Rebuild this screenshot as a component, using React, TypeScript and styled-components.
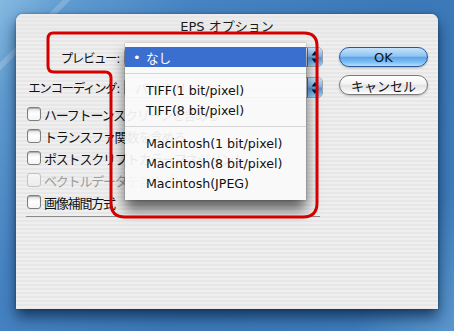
import styled, { createGlobalStyle } from 'styled-components';

const GlobalStyle = createGlobalStyle`
  html, body {
    margin: 0;
    padding: 0;
  }
  body {
    width: 454px;
    height: 331px;
    overflow: hidden;
    font-family: "DejaVu Sans", "Noto Sans CJK JP", sans-serif;
    color: #111;
  }
`;

const checks = [
  { label: 'ハーフトーンスクリーンを含める', disabled: false },
  { label: 'トランスファ関数を含める', disabled: false },
  { label: 'ポストスクリプトカラーマネジメント', disabled: false },
  { label: 'ベクトルデータを含める', disabled: true },
  { label: '画像補間方式', disabled: false },
];

type MenuEntry = { text: string; selected?: boolean } | 'sep';

const menuEntries: MenuEntry[] = [
  { text: 'なし', selected: true },
  'sep',
  { text: 'TIFF(1 bit/pixel)' },
  { text: 'TIFF(8 bit/pixel)' },
  'sep',
  { text: 'Macintosh(1 bit/pixel)' },
  { text: 'Macintosh(8 bit/pixel)' },
  { text: 'Macintosh(JPEG)' },
];

const ArrowsIcon = () => (
  <svg width="8" height="14" viewBox="0 0 8 14">
    <path d="M4 1 L7.5 5.5 L0.5 5.5 Z" fill="#111" />
    <path d="M4 13 L7.5 8.5 L0.5 8.5 Z" fill="#111" />
  </svg>
);

const App = () => {
  return (
    <Desktop>
      <GlobalStyle />
      <Window>
        <TitleBar>EPS オプション</TitleBar>
        <Body>
          <LeftPane>
            <FieldRow>
              <FieldLabel>プレビュー:</FieldLabel>
              <PopupButton>
                <PopupText>なし</PopupText>
                <PopupCap><ArrowsIcon /></PopupCap>
              </PopupButton>
            </FieldRow>
            <FieldRow>
              <FieldLabel>エンコーディング:</FieldLabel>
              <PopupButton>
                <PopupText>バイナリ</PopupText>
                <PopupCap><ArrowsIcon /></PopupCap>
              </PopupButton>
            </FieldRow>
            <CheckList>
              {checks.map((c) => (
                <CheckRow key={c.label} $disabled={c.disabled}>
                  <CheckBox $disabled={c.disabled} />
                  <span>{c.label}</span>
                </CheckRow>
              ))}
            </CheckList>
            <Divider />
          </LeftPane>
          <RightPane>
            <AquaButton $primary>OK</AquaButton>
            <AquaButton>キャンセル</AquaButton>
          </RightPane>
        </Body>

        <Menu>
          {menuEntries.map((m, i) =>
            m === 'sep' ? (
              <MenuSeparator key={i} />
            ) : (
              <MenuItem key={i} $selected={m.selected}>
                <Mark>{m.selected ? '•' : ''}</Mark>
                {m.text}
              </MenuItem>
            )
          )}
        </Menu>
      </Window>

      {/* red hand-drawn annotation over the dialog */}
      <Annotation width="454" height="331" viewBox="0 0 454 331">
        <path
          d="M53 33 L304 33 Q317 33 317 46 L317 203 Q317 217 303 217 L125 217 Q111 217 111 203 L111 78 Q111 72 105 72 L54 72 Q48 72 48 66 L48 39 Q48 33 53 33 Z"
          fill="none"
          stroke="#d40000"
          strokeWidth="3"
          strokeLinejoin="round"
        />
      </Annotation>
    </Desktop>
  );
};

export default App;

const Desktop = styled.div`
  position: relative;
  width: 454px;
  height: 331px;
  box-sizing: border-box;
  padding: 14px 0 0 16px;
  overflow: hidden;
  background:
    linear-gradient(135deg, transparent 0 8%, rgba(255, 255, 255, 0.18) 8% 9%, transparent 9%),
    linear-gradient(125deg, #86b9e0 0%, #5f9bd0 10%, #4683c2 28%, #3b78b8 60%, #3d7bb9 85%, #5a97cc 100%);
`;

const Window = styled.div`
  position: relative;
  width: 422px;
  height: 295px;
  display: flex;
  flex-direction: column;
  border-radius: 7px 7px 0 0;
  background: repeating-linear-gradient(180deg, #efefef 0 2px, #e7e7e7 2px 4px);
  box-shadow: 0 8px 14px rgba(0, 20, 50, 0.65), 0 0 3px rgba(0, 0, 0, 0.35);
`;

const TitleBar = styled.div`
  height: 22px;
  display: flex;
  align-items: center;
  justify-content: center;
  font-size: 13px;
  color: #1a1a1a;
  border-radius: 7px 7px 0 0;
  background: repeating-linear-gradient(180deg, #ececec 0 2px, #e6e6e6 2px 4px);
`;

const Body = styled.div`
  display: flex;
  padding-top: 11px;
`;

const LeftPane = styled.div`
  width: 307px;
  box-sizing: border-box;
  padding-left: 10px;
  display: flex;
  flex-direction: column;
`;

const FieldRow = styled.div`
  display: grid;
  grid-template-columns: 94px 199px;
  column-gap: 4px;
  align-items: center;
  height: 20px;
  & + & {
    margin-top: 10px;
    height: 21px;
  }
`;

const FieldLabel = styled.div`
  text-align: right;
  font-size: 12.5px;
  white-space: nowrap;
  letter-spacing: -1.4px;
  padding-right: 1px;
`;

const PopupButton = styled.div`
  height: 100%;
  box-sizing: border-box;
  display: flex;
  border: 1px solid #a2a2a2;
  border-radius: 5px;
  overflow: hidden;
  background: linear-gradient(180deg, #ffffff 0%, #f2f2f2 50%, #e9e9e9 51%, #fafafa 100%);
`;

const PopupText = styled.div`
  flex: 1;
  display: flex;
  align-items: center;
  padding-left: 10px;
  font-size: 13px;
  color: #222;
`;

const PopupCap = styled.div`
  width: 14px;
  display: flex;
  align-items: center;
  justify-content: center;
  border-left: 1px solid #3d6fb0;
  background: linear-gradient(180deg, #c4e1fa 0%, #7db7ee 45%, #4f95e3 55%, #8fd0fb 100%);
`;

const CheckList = styled.div`
  margin-top: 5px;
  display: flex;
  flex-direction: column;
`;

const CheckRow = styled.div<{ $disabled?: boolean }>`
  height: 22px;
  display: flex;
  align-items: center;
  gap: 3px;
  margin-left: 1px;
  font-size: 13px;
  letter-spacing: -1.2px;
  white-space: nowrap;
  color: ${(p) => (p.$disabled ? '#9c9c9c' : '#111')};
`;

const CheckBox = styled.div<{ $disabled?: boolean }>`
  width: 14px;
  height: 14px;
  box-sizing: border-box;
  flex-shrink: 0;
  border-radius: 3px;
  border: 1px solid ${(p) => (p.$disabled ? '#c2c2c2' : '#7e7e7e')};
  background: ${(p) =>
    p.$disabled
      ? 'linear-gradient(180deg, #f6f6f6, #ececec)'
      : 'linear-gradient(180deg, #e0e0e0 0%, #ffffff 45%, #f4f4f4 100%)'};
  box-shadow: ${(p) => (p.$disabled ? 'none' : 'inset 0 1px 1px rgba(0,0,0,0.25)')};
`;

const Divider = styled.div`
  margin-top: 3px;
  width: 294px;
  height: 1px;
  background: #8a8a8a;
`;

const RightPane = styled.div`
  margin-left: 16px;
  display: flex;
  flex-direction: column;
  gap: 8px;
`;

const AquaButton = styled.div<{ $primary?: boolean }>`
  width: 89px;
  height: 20px;
  box-sizing: border-box;
  display: flex;
  align-items: center;
  justify-content: center;
  border-radius: 10px;
  font-size: 13px;
  color: #111;
  border: 1px solid ${(p) => (p.$primary ? '#28579a' : '#7a7a7a')};
  background: ${(p) =>
    p.$primary
      ? 'linear-gradient(180deg, #c7e3fb 0%, #8ec4f3 45%, #5ea3ea 52%, #7fc0f6 80%, #b6e2fd 100%)'
      : 'linear-gradient(180deg, #ffffff 0%, #f3f3f3 45%, #e3e3e3 52%, #f1f1f1 80%, #ffffff 100%)'};
  box-shadow: 0 1px 2px rgba(0, 0, 0, 0.25);
`;

const Menu = styled.div`
  position: absolute;
  top: 29px;
  left: 109px;
  width: 181px;
  height: 157px;
  box-sizing: border-box;
  padding: 4px 0 6px;
  background: rgba(250, 250, 250, 0.93);
  box-shadow: 0 10px 13px rgba(0, 0, 0, 0.6), 0 0 1px rgba(0, 0, 0, 0.5);
`;

const MenuItem = styled.div<{ $selected?: boolean }>`
  height: 20px;
  display: flex;
  align-items: center;
  padding-left: 8px;
  font-size: 12.6px;
  white-space: nowrap;
  color: ${(p) => (p.$selected ? '#ffffff' : '#111')};
  background: ${(p) => (p.$selected ? '#3a6ecf' : 'transparent')};
`;

const Mark = styled.span`
  width: 13px;
  font-size: 13px;
`;

const MenuSeparator = styled.div`
  height: 13px;
  display: flex;
  align-items: center;
  &::after {
    content: '';
    flex: 1;
    height: 1px;
    background: #d6d6d6;
  }
`;

const Annotation = styled.svg`
  position: absolute;
  top: 0;
  left: 0;
  pointer-events: none;
`;
